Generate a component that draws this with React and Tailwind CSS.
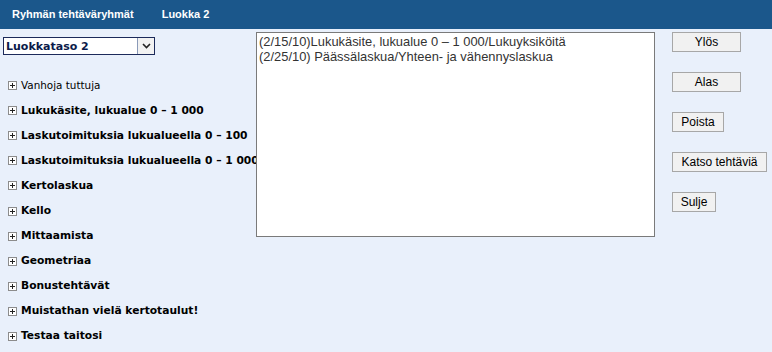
import React from "react";

const groups = [
  { label: "Vanhoja tuttuja", bold: false },
  { label: "Lukukäsite, lukualue 0 – 1 000", bold: true },
  { label: "Laskutoimituksia lukualueella 0 – 100", bold: true },
  { label: "Laskutoimituksia lukualueella 0 – 1 000", bold: true },
  { label: "Kertolaskua", bold: true },
  { label: "Kello", bold: true },
  { label: "Mittaamista", bold: true },
  { label: "Geometriaa", bold: true },
  { label: "Bonustehtävät", bold: true },
  { label: "Muistathan vielä kertotaulut!", bold: true },
  { label: "Testaa taitosi", bold: true },
];

const selected = [
  "(2/15/10)Lukukäsite, lukualue 0 – 1 000/Lukuyksiköitä",
  "(2/25/10) Päässälaskua/Yhteen- ja vähennyslaskua",
];

const buttons = [
  { label: "Ylös", width: "w-[69px]" },
  { label: "Alas", width: "w-[69px]" },
  { label: "Poista", width: "w-[52px]" },
  { label: "Katso tehtäviä", width: "w-[95px]" },
  { label: "Sulje", width: "w-[44px]" },
];

const PlusBox = () => (
  <svg width="9" height="9" viewBox="0 0 9 9" className="shrink-0">
    <rect x="0.5" y="0.5" width="8" height="8" fill="#fff" stroke="#8c8c8c" />
    <path d="M2 4.5h5M4.5 2v5" stroke="#222" strokeWidth="1" />
  </svg>
);

const App = () => {
  return (
    <div className="w-[772px] h-[352px] overflow-hidden bg-[#e9f0fb] font-['DejaVu_Sans',Verdana,sans-serif]">
      <div className="h-[29px] bg-[#1b578b] flex items-center text-white text-[11px] font-bold font-['Liberation_Sans',Arial,sans-serif]">
        <span className="ml-[12px]">Ryhmän tehtäväryhmät</span>
        <span className="ml-[28px]">Luokka 2</span>
      </div>

      <div className="flex">
        <div className="w-[256px] overflow-hidden shrink-0">
          <div className="mt-[8px] ml-[3px] w-[152px] h-[18px] border border-[#1c2a5a] bg-white flex items-center">
            <span className="flex-1 pl-[2px] text-[11px] font-bold text-[#0b1a4a] leading-none">
              Luokkataso 2
            </span>
            <span className="w-[17px] h-[16px] border-l border-[#8a9ab8] bg-[#f2f2f2] flex items-center justify-center">
              <svg width="9" height="6" viewBox="0 0 9 6">
                <path d="M1 1l3.5 3.5L8 1" stroke="#222" strokeWidth="1.6" fill="none" />
              </svg>
            </span>
          </div>

          <ul className="mt-[18px]">
            {groups.map((g) => (
              <li
                key={g.label}
                className="h-[25.1px] flex items-center gap-[4px] pl-[8px] whitespace-nowrap text-black"
              >
                <PlusBox />
                <span className={g.bold ? "font-bold text-[10.7px]" : "text-[10.4px]"}>{g.label}</span>
              </li>
            ))}
          </ul>
        </div>

        <div className="mt-[3px] w-[399px] h-[205px] border border-[#7a7a7a] bg-white shrink-0 pl-[2px] pt-[1px] font-['Liberation_Sans',Arial,sans-serif] text-[12.9px] leading-[15px] text-[#333]">
          {selected.map((s) => (
            <div key={s} className="whitespace-nowrap">
              {s}
            </div>
          ))}
        </div>

        <div className="ml-[17px] mt-[3px] flex flex-col gap-[20px]">
          {buttons.map((b) => (
            <button
              key={b.label}
              className={`${b.width} h-[20px] border border-[#a7a7a7] bg-[#f1f1f1] text-[12px] text-black font-['Liberation_Sans',Arial,sans-serif] leading-none`}
            >
              {b.label}
            </button>
          ))}
        </div>
      </div>
    </div>
  );
};

export default App;
